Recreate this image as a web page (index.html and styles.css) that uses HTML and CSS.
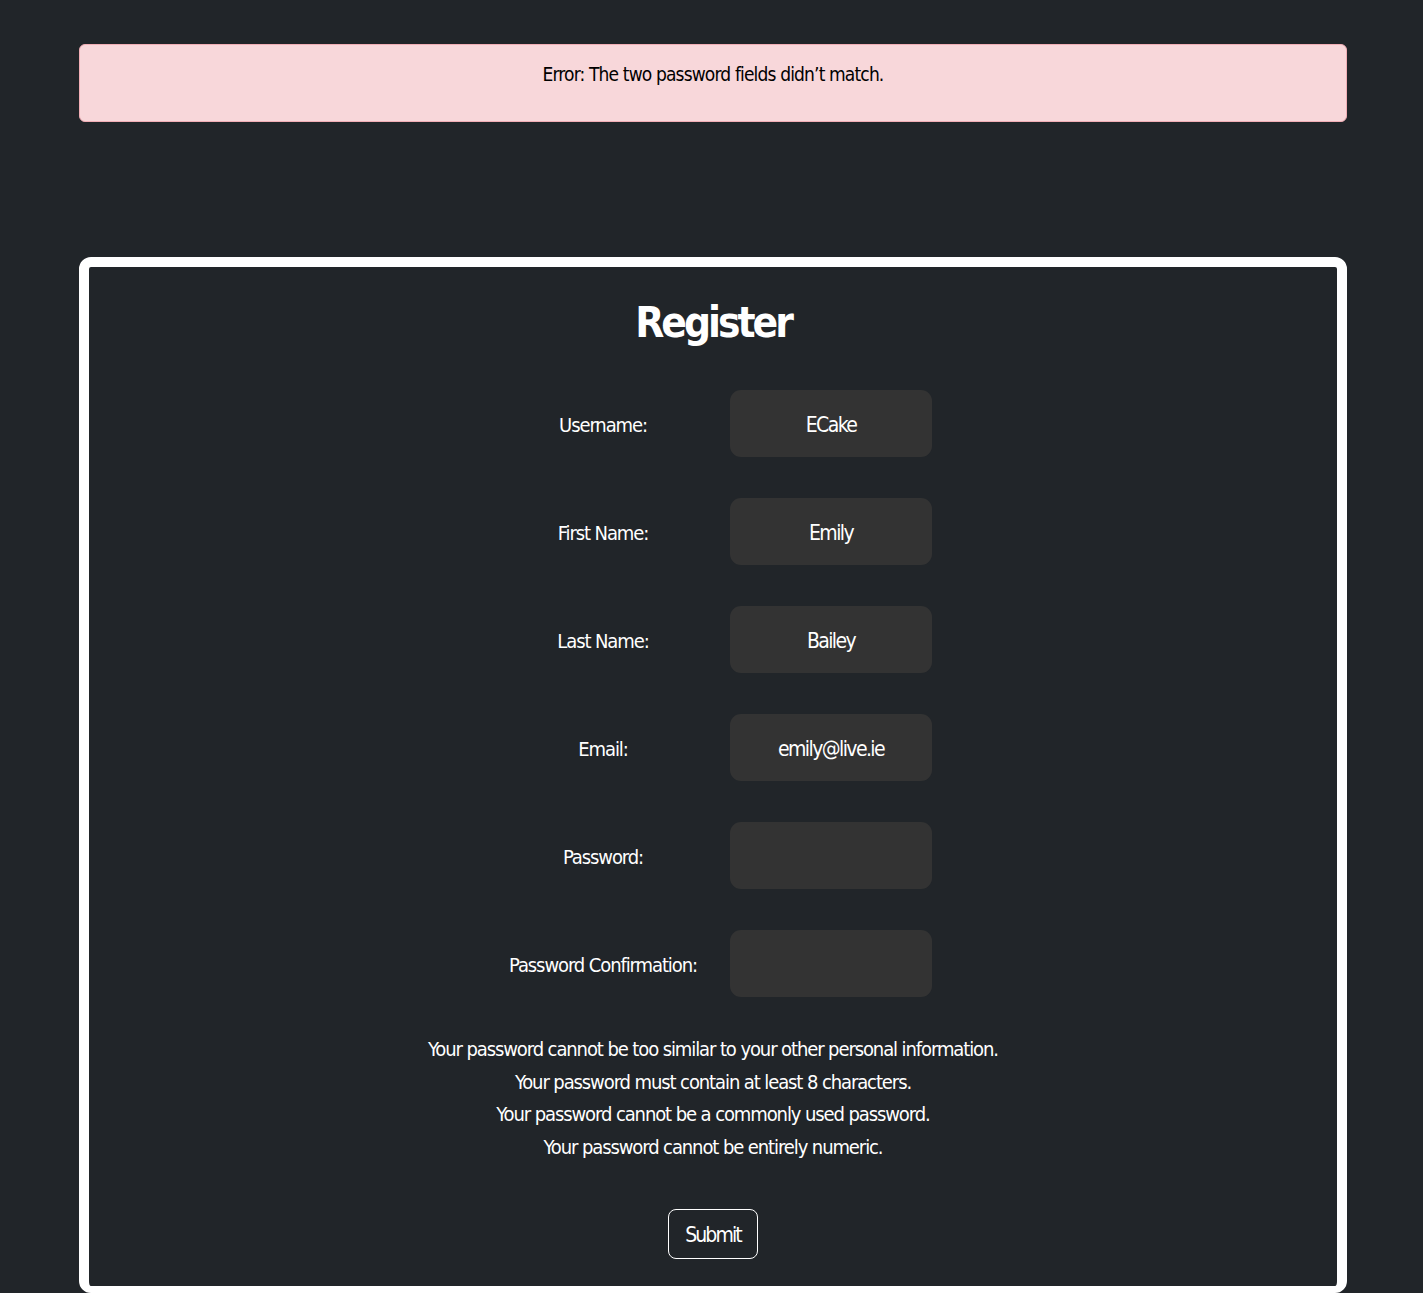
FILE: index.html
```html
<!DOCTYPE html>
<html lang="en">
<head>
<meta charset="utf-8">
<title>Register</title>
<link rel="stylesheet" href="styles.css">
</head>
<body>
<main class="page">
  <div class="alert">Error: The two password fields didn’t match.</div>
  <section class="card">
    <h1 class="title">Register</h1>
    <form class="form">
      <div class="grid">
        <label class="label">Username:</label>
        <div class="cell"><div class="input">ECake</div></div>
        <label class="label">First Name:</label>
        <div class="cell"><div class="input">Emily</div></div>
        <label class="label">Last Name:</label>
        <div class="cell"><div class="input">Bailey</div></div>
        <label class="label">Email:</label>
        <div class="cell"><div class="input">emily@live.ie</div></div>
        <label class="label">Password:</label>
        <div class="cell"><div class="input"></div></div>
        <label class="label">Password Confirmation:</label>
        <div class="cell"><div class="input"></div></div>
      </div>
      <ul class="help">
        <li>Your password cannot be too similar to your other personal information.</li>
        <li>Your password must contain at least 8 characters.</li>
        <li>Your password cannot be a commonly used password.</li>
        <li>Your password cannot be entirely numeric.</li>
      </ul>
      <div class="actions"><button type="button" class="submit">Submit</button></div>
    </form>
  </section>
</main>
</body>
</html>
```

FILE: styles.css
```css
html, body {
  margin: 0;
  padding: 0;
  background: #212529;
}
body {
  font-family: "DejaVu Sans Condensed", "DejaVu Sans", sans-serif;
  font-stretch: condensed;
  letter-spacing: -1.1px;
  color: #ffffff;
}
.page {
  width: 1268px;
  margin: 0 0 0 79px;
  padding-top: 44px;
}
.alert {
  box-sizing: border-box;
  height: 78px;
  background: #f8d7da;
  border: 1px solid #f1aeb5;
  border-radius: 6px;
  color: #000000;
  font-size: 19px;
  letter-spacing: -0.85px;
  text-align: center;
  padding-top: 18px;
}
.card {
  margin-top: 135px;
  border: 10px solid #ffffff;
  border-bottom-width: 7px;
  border-radius: 12px;
  background: #212529;
  padding: 28px 0 27px;
}
.title {
  margin: 0;
  font-size: 42px;
  font-weight: bold;
  text-align: center;
  line-height: 56px;
  letter-spacing: -3px;
}
.form {
  margin: 39px 0 0;
}
.grid {
  display: grid;
  grid-template-columns: 220px 220px;
  justify-content: center;
  row-gap: 41px;
  align-items: center;
}
.label {
  text-align: center;
  font-size: 20px;
  white-space: nowrap;
  padding-top: 3px;
}
.cell {
  padding-left: 17px;
}
.input {
  box-sizing: border-box;
  width: 202px;
  height: 67px;
  padding-top: 3px;
  background: #333333;
  border-radius: 11px;
  display: flex;
  align-items: center;
  justify-content: center;
  font-size: 21px;
  letter-spacing: -1.6px;
}
.help {
  list-style: none;
  margin: 36px 0 0;
  padding: 0;
  text-align: center;
  font-size: 20px;
  line-height: 32.5px;
}
.actions {
  margin-top: 46px;
  text-align: center;
}
.submit {
  width: 90px;
  height: 50px;
  background: transparent;
  border: 1px solid #ffffff;
  border-radius: 8px;
  color: #ffffff;
  font-family: inherit;
  font-stretch: condensed;
  letter-spacing: -1.9px;
  font-size: 21px;
  padding: 2px 0 0;
}
```
